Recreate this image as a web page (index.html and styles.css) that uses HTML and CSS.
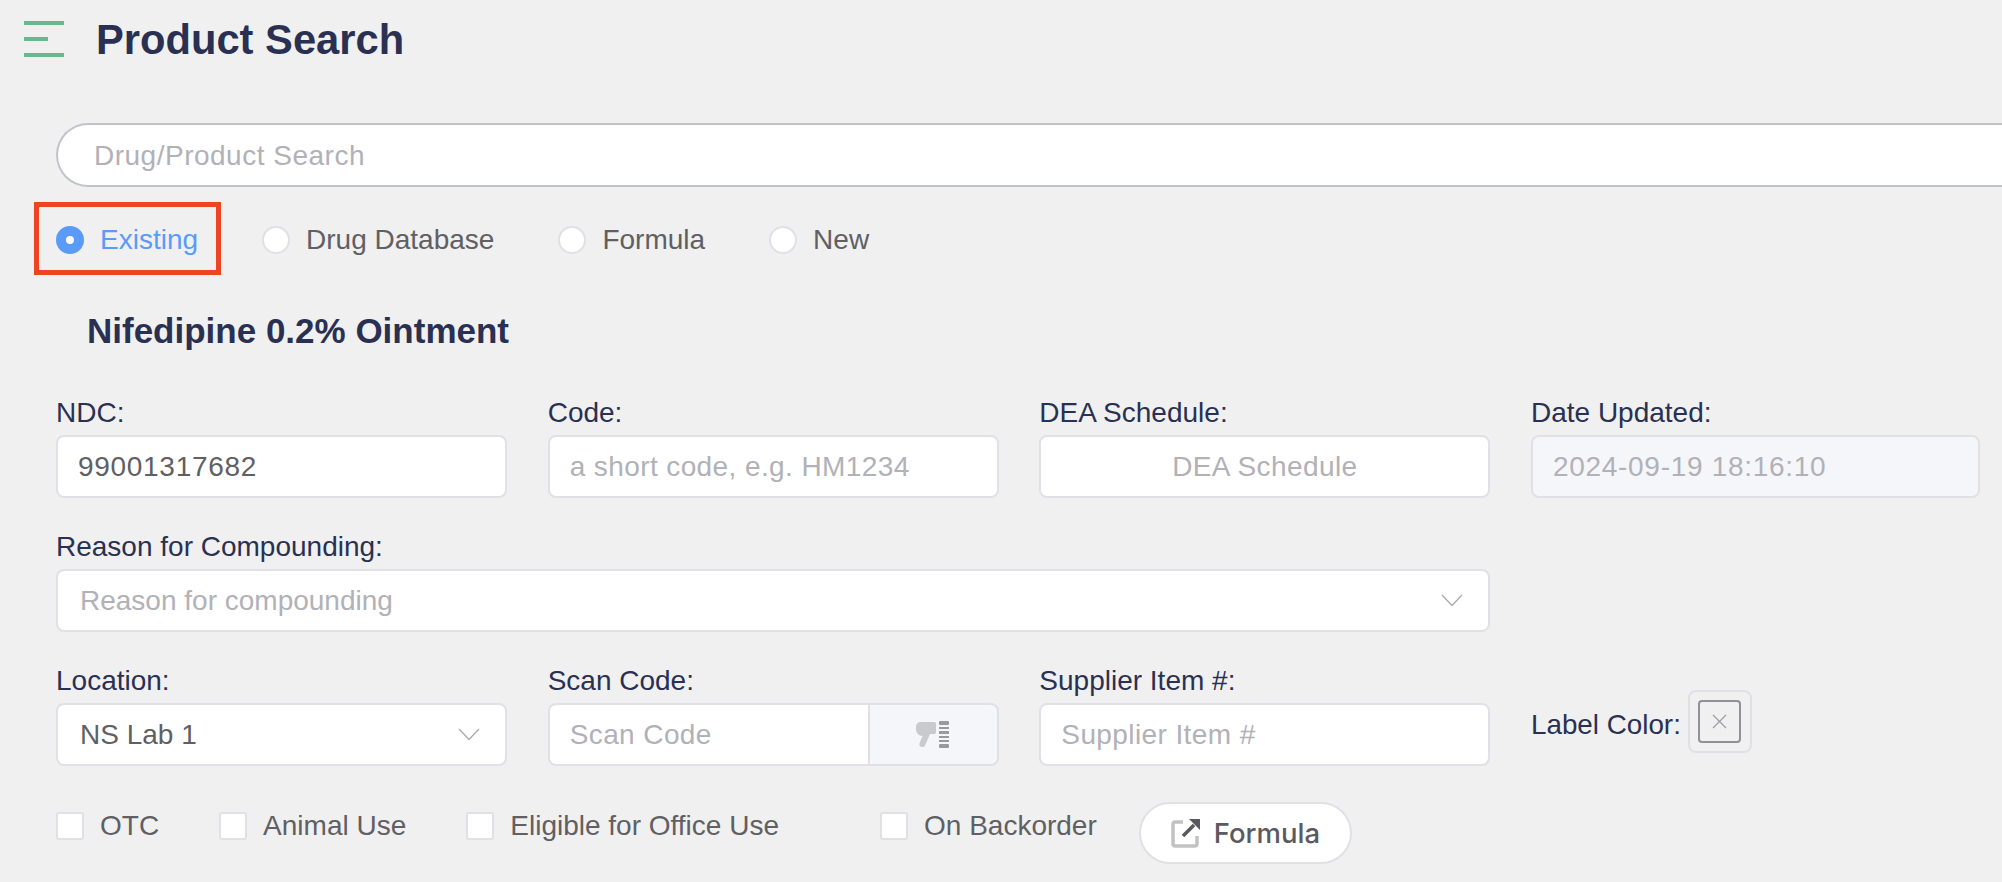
FILE: index.html
```html
<!DOCTYPE html>
<html lang="en">
<head>
<meta name="viewport" content="width=device-width, initial-scale=1.0">
<title>Product Search</title>
<link rel="stylesheet" href="styles.css">
</head>
<body>

  <div class="topbar">
    <div class="burger"><span></span><span class="short"></span><span></span></div>
    <h1>Product Search</h1>
  </div>

  <div class="content">
    <input class="search" type="text" placeholder="Drug/Product Search">

    <div class="radios">
      <label class="radio active"><span class="dot"></span>Existing</label>
      <label class="radio"><span class="dot"></span>Drug Database</label>
      <label class="radio"><span class="dot"></span>Formula</label>
      <label class="radio"><span class="dot"></span>New</label>
    </div>

    <h2>Nifedipine 0.2% Ointment</h2>

    <div class="form-grid">
      <div class="field">
        <label>NDC:</label>
        <input class="box value digits" type="text" value="99001317682">
      </div>
      <div class="field">
        <label>Code:</label>
        <input class="box" type="text" placeholder="a short code, e.g. HM1234">
      </div>
      <div class="field">
        <label>DEA Schedule:</label>
        <input class="box centered" type="text" placeholder="DEA Schedule">
      </div>
      <div class="field">
        <label>Date Updated:</label>
        <input class="box disabled digits" type="text" placeholder="2024-09-19 18:16:10" disabled>
      </div>

      <div class="field span-3">
        <label>Reason for Compounding:</label>
        <div class="box select placeholder">
          Reason for compounding
          <svg width="22" height="13" viewBox="0 0 22 13"><path d="M1 1l10 10.5L21 1" fill="none" stroke="#a9a9b0" stroke-width="1.3"/></svg>
        </div>
      </div>
      <div class="field"></div>

      <div class="field">
        <label>Location:</label>
        <div class="box select value">
          NS Lab 1
          <svg width="22" height="13" viewBox="0 0 22 13"><path d="M1 1l10 10.5L21 1" fill="none" stroke="#a9a9b0" stroke-width="1.3"/></svg>
        </div>
      </div>
      <div class="field">
        <label>Scan Code:</label>
        <div class="scan-group">
          <input class="box" type="text" placeholder="Scan Code">
          <div class="scan-btn">
            <svg width="34" height="27" viewBox="0 0 34 27">
              <path d="M5 1h13c1.500 0 2 .8 2 2v8c0 1.500-.8 2-2 2h-4L9 24.500c-.8 1.500-2.500 2-4 1.200-1.500-.8-2-2-1.500-3.500L6.500 15C3 15 0 12 0 8V6c0-3 2-5 5-5z" fill="#c9cace"/>
              <g fill="#98999f">
                <rect x="23" y="0" width="10" height="4" rx="1"/>
                <rect x="23" y="6" width="10" height="2"/>
                <rect x="23" y="10" width="10" height="3"/>
                <rect x="23" y="15" width="10" height="2"/>
                <rect x="23" y="19" width="10" height="2"/>
                <rect x="23" y="23" width="10" height="4" rx="1"/>
              </g>
            </svg>
          </div>
        </div>
      </div>
      <div class="field">
        <label>Supplier Item #:</label>
        <input class="box" type="text" placeholder="Supplier Item #">
      </div>
      <div class="field color-field">
        <span class="color-label">Label Color:</span>
        <div class="color-picker">
          <div class="color-swatch">
            <svg width="15" height="15" viewBox="0 0 15 15"><path d="M1 1l13 13M14 1L1 14" stroke="#9c9ca3" stroke-width="1.2"/></svg>
          </div>
        </div>
      </div>
    </div>

    <div class="checks">
      <label class="check c-otc"><span class="tick"></span>OTC</label>
      <label class="check c-animal"><span class="tick"></span>Animal Use</label>
      <label class="check c-office"><span class="tick"></span>Eligible for Office Use</label>
      <label class="check c-back"><span class="tick"></span>On Backorder</label>
      <button class="formula-btn">
        <svg width="29" height="29" viewBox="0 0 29 29">
          <path d="M12 3H4.500C3 3 2 4 2 5.500v19C2 26 3 27 4.500 27h19c1.500 0 2.500-1 2.500-2.500V17" fill="none" stroke="#c2c2c4" stroke-width="3.500"/>
          <path d="M12 17L23 6" stroke="#58585e" stroke-width="3.500"/>
          <path d="M18 0h11v11z" fill="#58585e"/>
        </svg>
        Formula
      </button>
    </div>
  </div>

</body>
</html>
```
FILE: styles.css
```css
html, body {
  margin: 0;
  height: 100%;
  overflow: hidden;
}

body {
  background-color: #f0f0f0;
  font-family: "Liberation Sans", Arial, sans-serif;
  font-size: 28px;
  color: #5f5f64;
}

.topbar {
  display: flex;
  align-items: center;
  height: 78px;
  padding-left: 24px;
}

.burger {
  display: flex;
  flex-direction: column;
  gap: 12px;
  width: 40px;
  margin-right: 32px;
}

.burger span {
  display: block;
  height: 4px;
  background-color: #65b98a;
}

.burger .short {
  width: 24px;
}

h1 {
  margin: 2px 0 0;
  font-size: 41.7px;
  font-weight: bold;
  color: #2a3052;
}

.content {
  padding: 45px 0 0 56px;
}

input {
  font-family: inherit;
  font-size: 28px;
  letter-spacing: 0.4px;
  outline: none;
}

input::placeholder {
  color: #b1b1b7;
  opacity: 1;
}

.search {
  display: block;
  box-sizing: border-box;
  width: 100%;
  height: 64px;
  padding: 2px 36px 0;
  background-color: #fff;
  border: 2px solid #c0c3c9;
  border-right: none;
  border-radius: 32px 0 0 32px;
  letter-spacing: 0.5px;
}

.radios {
  display: flex;
  align-items: center;
  height: 28px;
  margin-top: 39px;
}

.radio {
  position: relative;
  display: flex;
  align-items: center;
  margin-right: 64px;
}

.dot {
  box-sizing: border-box;
  width: 28px;
  height: 28px;
  margin-right: 16px;
  background-color: #fff;
  border: 2px solid #e0e0e6;
  border-radius: 50%;
}

.radio.active {
  color: #5a9bfa;
}

.radio.active .dot {
  background-color: #5a9bfa;
  border: 10px solid #5a9bfa;
}

.radio.active .dot::after {
  content: "";
  display: block;
  width: 8px;
  height: 8px;
  background-color: #fff;
  border-radius: 50%;
}

/* red marker drawn over the first radio */
.radio.active::before {
  content: "";
  position: absolute;
  left: -22px;
  top: -22px;
  width: 187px;
  height: 73px;
  box-sizing: border-box;
  border: 5px solid #ef4423;
}

h2 {
  margin: 57px 0 0 31px;
  height: 40px;
  line-height: 40px;
  font-size: 35px;
  font-weight: bold;
  color: #2a3052;
}

.form-grid {
  display: grid;
  grid-template-columns: repeat(3, 451px) 449px;
  column-gap: 40.67px;
  row-gap: 35px;
  margin-top: 48px;
}

.field label {
  display: block;
  height: 27px;
  line-height: 27px;
  margin-bottom: 9px;
  color: #2a3052;
  font-size: 28px;
}

.span-3 {
  grid-column: span 3;
}

.box {
  display: flex;
  align-items: center;
  box-sizing: border-box;
  width: 100%;
  height: 63px;
  padding: 0 20px;
  background-color: #fff;
  border: 2px solid #e0e0e6;
  border-radius: 8px;
}

.digits {
  letter-spacing: 0.7px;
}

.value {
  color: #5f5f64;
}

.placeholder {
  color: #b1b1b7;
}

.centered {
  text-align: center;
}

.disabled {
  background-color: #f5f6fa;
}

.select {
  justify-content: space-between;
  padding: 0 25px 0 22px;
}

.scan-group {
  display: flex;
}

.scan-group .box {
  flex: 1;
  min-width: 0;
  border-right: none;
  border-radius: 8px 0 0 8px;
}

.scan-btn {
  display: flex;
  align-items: center;
  justify-content: center;
  box-sizing: border-box;
  width: 131px;
  height: 63px;
  background-color: #f5f6fa;
  border: 2px solid #e0e0e6;
  border-radius: 0 8px 8px 0;
}

.color-field {
  display: flex;
  align-items: flex-start;
  padding-top: 23px;
}

.color-label {
  line-height: 32px;
  margin-top: 19px;
  margin-right: 7px;
  color: #2a3052;
  font-size: 27.8px;
}

.color-picker {
  display: flex;
  align-items: center;
  justify-content: center;
  box-sizing: border-box;
  width: 64px;
  height: 63px;
  border: 2px solid #e0e0e6;
  border-radius: 8px;
}

.color-swatch {
  display: flex;
  align-items: center;
  justify-content: center;
  box-sizing: border-box;
  width: 43px;
  height: 43px;
  border: 2px solid #909096;
  border-radius: 4px;
}

.checks {
  display: flex;
  align-items: flex-start;
  margin-top: 36px;
}

.check {
  display: flex;
  align-items: center;
  height: 28px;
  margin-top: 10px;
}

.c-otc, .c-animal {
  margin-right: 60px;
}

.c-office {
  margin-right: 101px;
}

.c-back {
  margin-right: 42px;
}

.tick {
  box-sizing: border-box;
  width: 28px;
  height: 28px;
  margin-right: 16px;
  background-color: #fff;
  border: 2px solid #e0e0e6;
  border-radius: 3px;
}

.formula-btn {
  display: flex;
  align-items: center;
  gap: 14px;
  box-sizing: border-box;
  width: 213px;
  height: 62px;
  padding: 0 0 0 30px;
  background-color: #fff;
  border: 2px solid #e0e0e6;
  border-radius: 31px;
  font-family: Inter, "Liberation Sans", sans-serif;
  font-size: 27.500px;
  font-weight: 500;
  color: #5a5a60;
}
```
